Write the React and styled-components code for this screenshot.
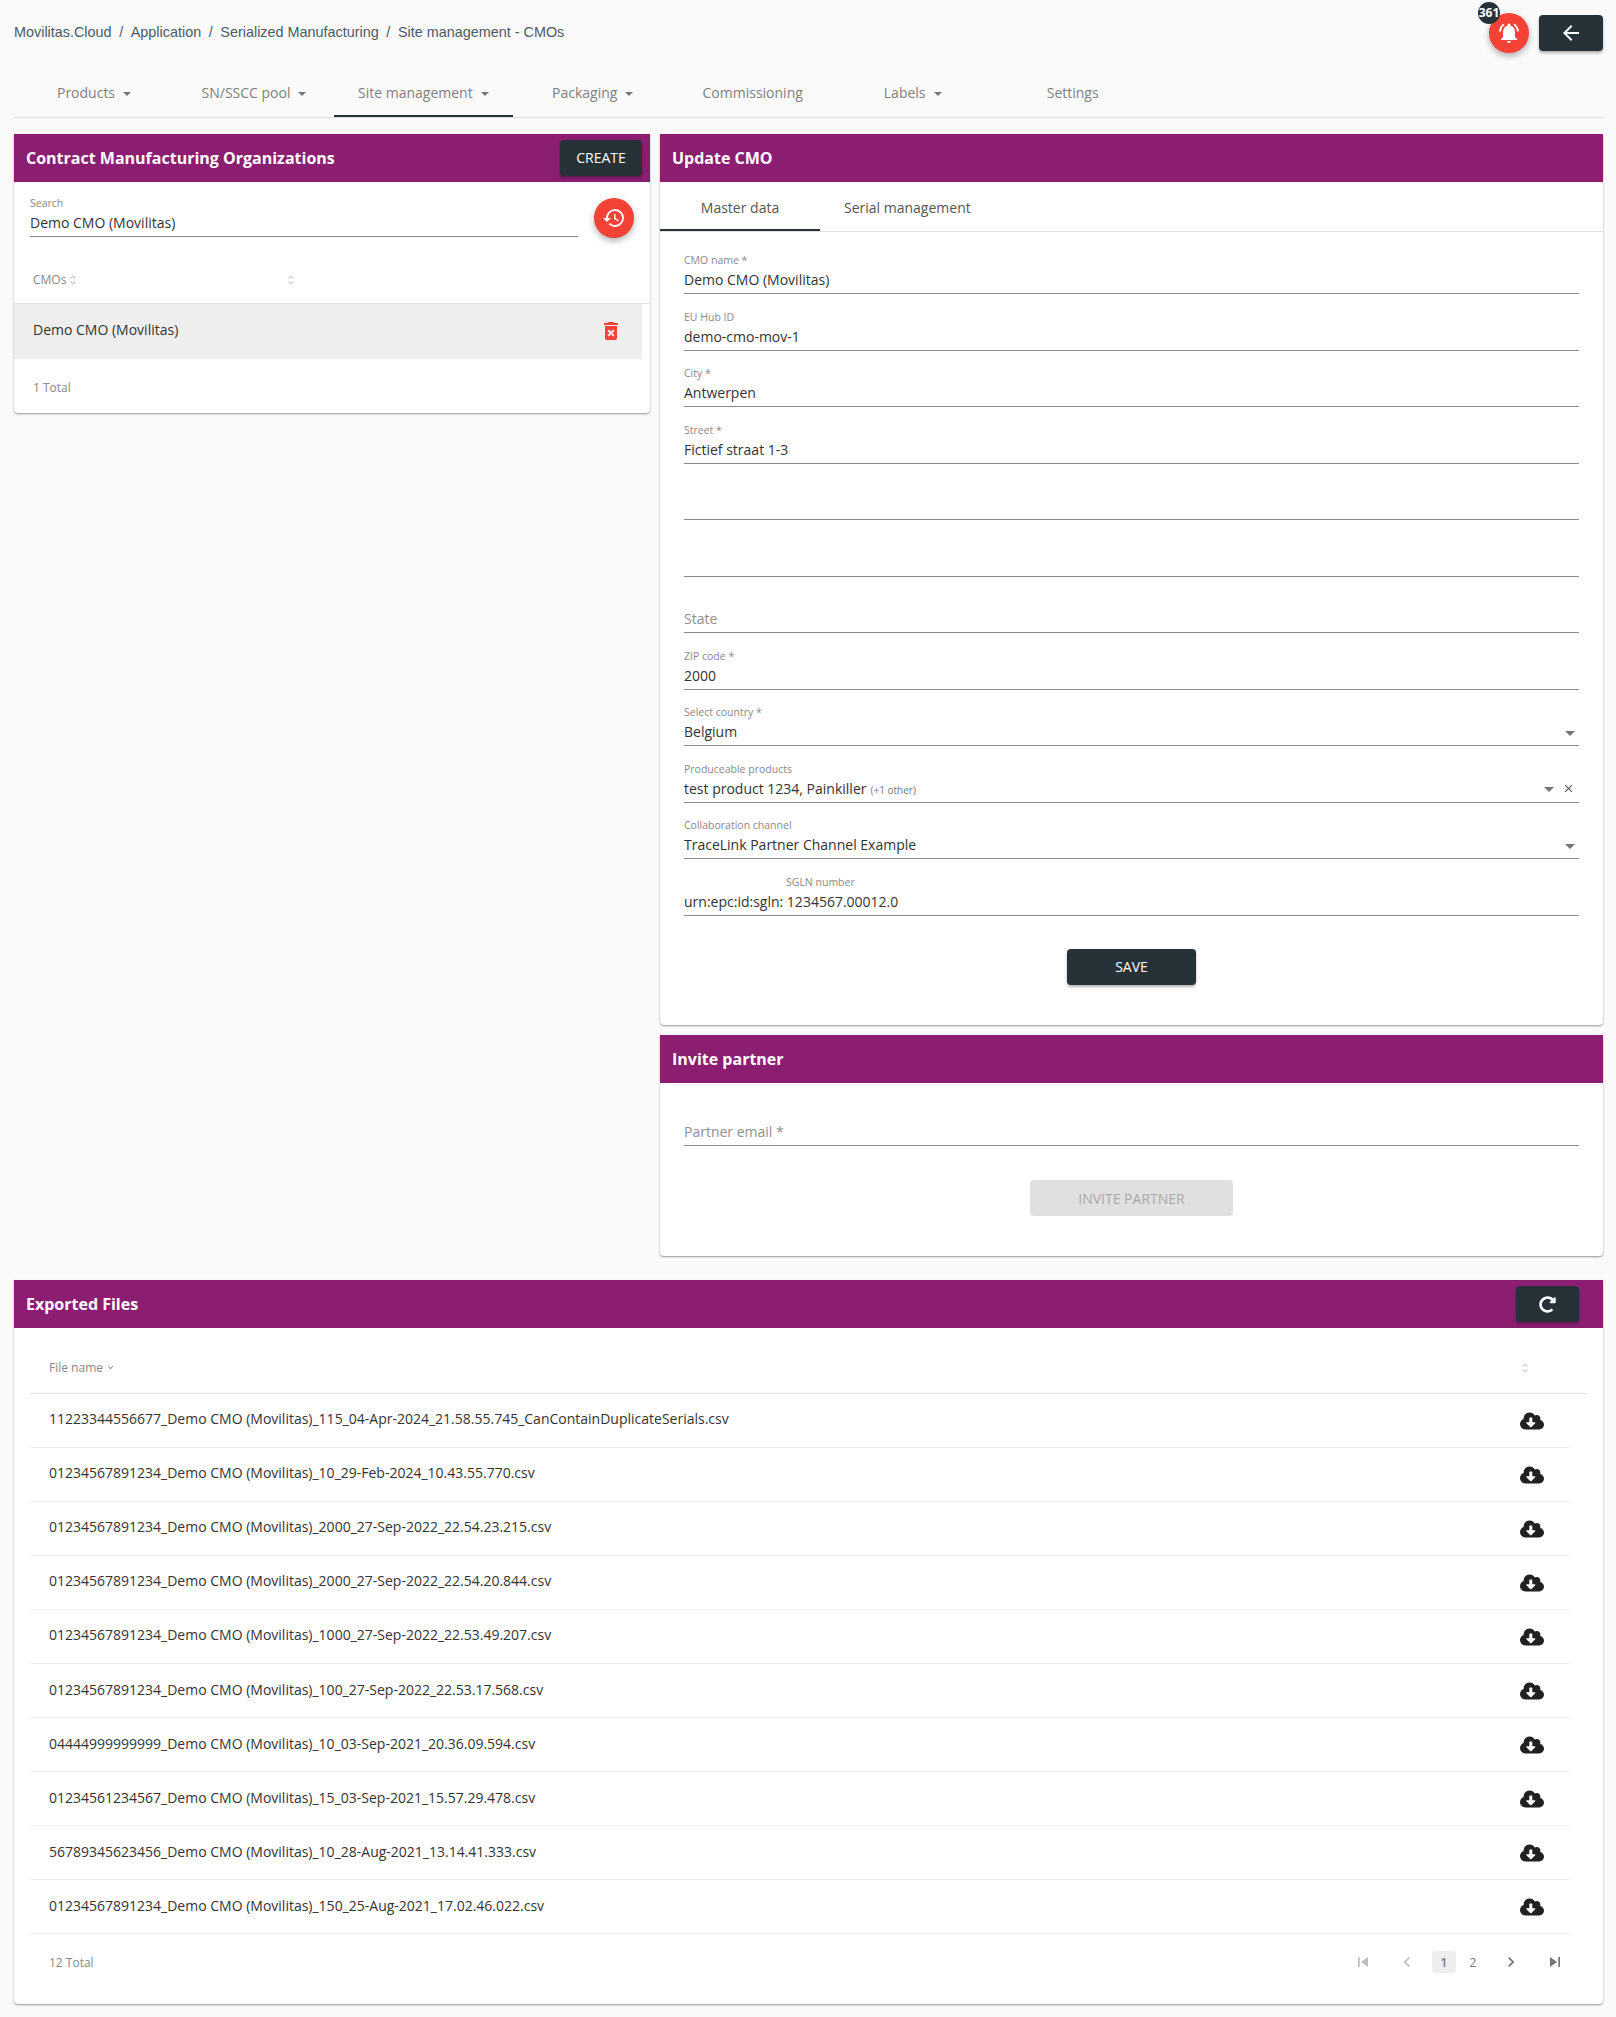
import React from 'react';
import styled, { createGlobalStyle } from 'styled-components';
import { MdArrowBack, MdNotificationsActive, MdRestore, MdDeleteForever, MdSkipPrevious, MdSkipNext, MdChevronLeft, MdChevronRight, MdClose, MdExpandMore } from 'react-icons/md';
import { FaCloudDownloadAlt, FaRedoAlt } from 'react-icons/fa';

const Global = createGlobalStyle`
  html, body { margin: 0; background: #fafafa; }
  body { font-family: "Open Sans", "Noto Sans", sans-serif; font-size: 14px; color: #333; }
  * { box-sizing: border-box; }
`;
const Page = styled.div`width: 1616px; height: 2017px; padding: 0 13px 0 14px; display: flex; flex-direction: column;`;
const Top = styled.div`height: 61px; display: flex; align-items: flex-start; justify-content: space-between; padding-top: 24px;`;
const Crumbs = styled.div`font: 14.4px/17px "Liberation Sans", Arial, sans-serif; color: #4a5a68; display: flex; gap: 7.6px;`;
const TopRight = styled.div`display: flex; gap: 10px; margin-top: -9px;`;
const Fab = styled.button`
  position: relative; width: 40px; height: 40px; border: 0; border-radius: 50%; background: #f44336; color: #fff; padding: 0;
  display: flex; align-items: center; justify-content: center; box-shadow: 0 3px 6px rgba(0,0,0,.3); font-size: 24px;
`;
const BellFab = styled(Fab)`margin-top: -2px;`;
const Badge = styled.span`
  position: absolute; left: -11px; top: -11px; width: 22px; height: 22px; border-radius: 50%; background: #263238; color: #fff;
  font: 700 12px/22px "Open Sans", sans-serif; text-align: center;
`;
const DarkButton = styled.button`
  width: ${p => p.$w || 64}px; height: 36px; border: 0; border-radius: 4px; background: #263238; color: #fff; padding: 0;
  font: 400 14px/36px "Open Sans", sans-serif; display: flex; align-items: center; justify-content: center;
  box-shadow: 0 2px 3px rgba(0,0,0,.3); flex: none;
`;
const Nav = styled.nav`display: flex; height: 57px; border-bottom: 1px solid #ddd;`;
const NavTab = styled.div`
  min-width: 160px; padding: 9px 24px 0; height: 56px; display: flex; align-items: center; justify-content: center; gap: 8px; color: #808080;
  border-bottom: 2px solid ${p => p.$on ? '#263238' : 'transparent'};
`;
const Caret = styled.span`width: 0; height: 0; border-left: ${p => p.$s || 4}px solid transparent; border-right: ${p => p.$s || 4}px solid transparent; border-top: ${p => p.$s || 4}px solid #757575; flex: none; margin-top: 2px;`;
const Columns = styled.div`display: grid; grid-template-columns: 636px 943px; gap: 10px; margin-top: 16px; align-items: start;`;
const Stack = styled.div`display: flex; flex-direction: column; gap: 10px;`;
const Card = styled.section`background: #fff; border-radius: 0 0 4px 4px; box-shadow: 0 1px 2px rgba(0,0,0,.4); height: ${p => p.$h}px; display: flex; flex-direction: column;`;
const Header = styled.header`
  height: 48px; flex: none; background: #8b1e71; color: #fff; display: flex; align-items: center; justify-content: space-between;
  padding: 0 ${p => p.$pr || 8}px 0 12px; font: 700 16px/20px "Open Sans", sans-serif;
`;
const SearchRow = styled.div`display: flex; height: 56px; padding: 16px 16px 0 16px; gap: 16px; align-items: flex-start;`;
const Search = styled.div`flex: 1; height: 39px; border-bottom: 1px solid #8a8a8a; display: flex; flex-direction: column;`;
const ListHead = styled.div`height: 66px; border-bottom: 1px solid #e0e0e0; display: flex; align-items: center; padding: 18px 0 0 19px; font-size: 12px; color: #888;`;
const SortCell = styled.span`width: 254px; display: flex; align-items: center; gap: 3px;`;
const CmoRow = styled.div`width: 628px; height: 55px; background: #eee; display: flex; align-items: center; justify-content: space-between; padding: 0 19px 5px 19px;`;
const Trash = styled.span`color: #f44336; font-size: 24px; display: flex; margin-top: 4px;`;
const Total = styled.div`font-size: 12px; color: #888; padding-left: 19px; margin-top: 20px;`;
const TabBar = styled.div`height: 50px; flex: none; border-bottom: 1px solid #e0e0e0; display: flex;`;
const InnerTab = styled.div`
  min-width: 160px; padding: ${p => p.$on ? 4 : 2}px 24px 0; height: 49px; display: flex; align-items: center; justify-content: center; color: #555; 
  border-bottom: ${p => p.$on ? '2px solid #263238' : '0'}; margin-bottom: -1px;
`;
const Form = styled.div`padding: ${p => p.$pt}px 24px 0 24px; display: flex; flex-direction: column;`;
const Field = styled.div`height: 56.5px; flex: none; border-bottom: 1px solid #8a8a8a; display: flex; flex-direction: column; justify-content: flex-end; padding-bottom: 3px; position: relative;`;
const Label = styled.label`font-size: 10.5px; line-height: 14px; color: #8a8a8a; margin-left: ${p => p.$ml || 0}px; margin-bottom: 3px;`;
const SearchLabel = styled(Label)`margin: -2px 0 3px 0;`;
const Value = styled.div`font-size: 14px; line-height: 20px; height: 20px; color: ${p => p.$muted ? '#909090' : '#333'}; display: flex; align-items: center;`;
const Other = styled.small`font-size: 10px; color: #777; margin-left: 4px; margin-top: 2px;`;
const Tools = styled.span`margin-left: auto; display: flex; align-items: center; gap: 8px; padding-right: 4px; color: #555;`;
const Actions = styled.div`display: flex; justify-content: center; margin-top: ${p => p.$mt}px;`;
const Disabled = styled.button`width: 203px; height: 36px; border: 0; border-radius: 4px; background: #e0e0e0; color: #a8a8a8; font: 14px "Open Sans", sans-serif;`;
const Table = styled.div`padding: 0 16px; display: flex; flex-direction: column;`;
const FileHead = styled.div`height: 66px; flex: none; border-bottom: 1px solid #e0e0e0; display: flex; align-items: center; justify-content: space-between; padding: 14px 0 0 19px; font-size: 12px; color: #888;`;
const HeadName = styled.span`display: flex; align-items: center; gap: 2px;`;
const SortEnd = styled.span`display: flex; margin-right: 58px;`;
const FileRow = styled.div`width: 1540px; height: 54.04px; flex: none; border-bottom: 1px solid #eee; display: flex; align-items: center; justify-content: space-between; padding: 0 26px 3.32px 19px; margin-right: 17px;`;
const Cloud = styled.span`display: flex; font-size: 24px; color: #212121; margin-top: 4.4px;`;
const ExportWrap = styled(Stack)`margin-top: 24px;`;
const Footer = styled.div`display: flex; align-items: center; justify-content: space-between; height: 56px; padding: 0 20px 0 19px; font-size: 12px; color: #888;`;
const Pager = styled.div`display: flex; align-items: center; margin-right: -6px; color: #777; font-size: 12px; height: 22px;`;
const PageIcon = styled.span`width: ${p => p.$w}px; margin-right: ${p => p.$mr || 0}px; display: flex; justify-content: center; font-size: 20px; color: ${p => p.$off ? '#bdbdbd' : '#757575'};`;
const PageNum = styled.span`width: 24px; height: 22px; border-radius: 3px; display: flex; align-items: center; justify-content: center; margin-right: ${p => p.$mr || 0}px; background: ${p => p.$on ? '#eee' : 'transparent'}; font-weight: ${p => p.$on ? 600 : 400};`;

const Sort = () => (
  <svg width="8" height="12" viewBox="0 0 8 12" fill="none" stroke="#bbb" strokeWidth="1"><path d="M1.5 4.5 4 2l2.5 2.5M1.5 7.5 4 10l2.5-2.5" /></svg>
);

const F = ({ label, value, ml, muted, select, multi, other }) => (
  <Field>
    {label && <Label $ml={ml}>{label}</Label>}
    <Value $muted={muted}>
      {value}{other && <Other>{other}</Other>}
      {select && <Tools><Caret $s={5} />{multi && <MdClose size={13} />}</Tools>}
    </Value>
  </Field>
);

const files = [
  '11223344556677_Demo CMO (Movilitas)_115_04-Apr-2024_21.58.55.745_CanContainDuplicateSerials.csv',
  '01234567891234_Demo CMO (Movilitas)_10_29-Feb-2024_10.43.55.770.csv',
  '01234567891234_Demo CMO (Movilitas)_2000_27-Sep-2022_22.54.23.215.csv',
  '01234567891234_Demo CMO (Movilitas)_2000_27-Sep-2022_22.54.20.844.csv',
  '01234567891234_Demo CMO (Movilitas)_1000_27-Sep-2022_22.53.49.207.csv',
  '01234567891234_Demo CMO (Movilitas)_100_27-Sep-2022_22.53.17.568.csv',
  '04444999999999_Demo CMO (Movilitas)_10_03-Sep-2021_20.36.09.594.csv',
  '01234561234567_Demo CMO (Movilitas)_15_03-Sep-2021_15.57.29.478.csv',
  '56789345623456_Demo CMO (Movilitas)_10_28-Aug-2021_13.14.41.333.csv',
  '01234567891234_Demo CMO (Movilitas)_150_25-Aug-2021_17.02.46.022.csv',
];

const tabs = [['Products', 1], ['SN/SSCC pool', 1], ['Site management', 1, 1], ['Packaging', 1], ['Commissioning'], ['Labels', 1], ['Settings']];

export default function App() {
  return (
    <Page>
      <Global />
      <Top>
        <Crumbs>
          <span>Movilitas.Cloud</span><span>/</span><span>Application</span><span>/</span><span>Serialized Manufacturing</span><span>/</span><span>Site management - CMOs</span>
        </Crumbs>
        <TopRight>
          <BellFab><Badge>361</Badge><MdNotificationsActive /></BellFab>
          <DarkButton><MdArrowBack size={24} /></DarkButton>
        </TopRight>
      </Top>
      <Nav>
        {tabs.map(([t, c, on]) => <NavTab key={t} $on={on}>{t}{c && <Caret />}</NavTab>)}
      </Nav>
      <Columns>
        <Card $h={279}>
          <Header>Contract Manufacturing Organizations<DarkButton $w={82}>CREATE</DarkButton></Header>
          <SearchRow>
            <Search>
              <SearchLabel>Search</SearchLabel>
              <Value>Demo CMO (Movilitas)</Value>
            </Search>
            <Fab><MdRestore /></Fab>
          </SearchRow>
          <ListHead><SortCell>CMOs <Sort /></SortCell><Sort /></ListHead>
          <CmoRow>Demo CMO (Movilitas)<Trash><MdDeleteForever /></Trash></CmoRow>
          <Total>1 Total</Total>
        </Card>
        <Stack>
          <Card $h={891}>
            <Header>Update CMO</Header>
            <TabBar><InnerTab $on>Master data</InnerTab><InnerTab>Serial management</InnerTab></TabBar>
            <Form $pt={5.9}>
              <F label="CMO name *" value="Demo CMO (Movilitas)" />
              <F label="EU Hub ID" value="demo-cmo-mov-1" />
              <F label="City *" value="Antwerpen" />
              <F label="Street *" value="Fictief straat 1-3" />
              <F />
              <F />
              <F value="State" muted />
              <F label="ZIP code *" value="2000" />
              <F label="Select country *" value="Belgium" select />
              <F label="Produceable products" value="test product 1234, Painkiller" other="(+1 other)" select multi />
              <F label="Collaboration channel" value="TraceLink Partner Channel Example" select />
              <F label="SGLN number" ml={102} value="urn:epc:id:sgln: 1234567.00012.0" />
              <Actions $mt={33}><DarkButton $w={129}>SAVE</DarkButton></Actions>
            </Form>
          </Card>
          <Card $h={221}>
            <Header>Invite partner</Header>
            <Form $pt={6.5}>
              <F value="Partner email *" muted />
              <Actions $mt={34}><Disabled>INVITE PARTNER</Disabled></Actions>
            </Form>
          </Card>
        </Stack>
      </Columns>
      <ExportWrap>
        <Card $h={724}>
          <Header $pr={24}>Exported Files<DarkButton $w={63}><FaRedoAlt size={17} /></DarkButton></Header>
          <Table>
            <FileHead><HeadName>File name <MdExpandMore size={11} /></HeadName><SortEnd><Sort /></SortEnd></FileHead>
            {files.map(f => <FileRow key={f}>{f}<Cloud><FaCloudDownloadAlt /></Cloud></FileRow>)}
            <Footer>
              <span>12 Total</span>
              <Pager>
                <PageIcon $w={60} $off><MdSkipPrevious /></PageIcon>
                <PageIcon $w={28} $mr={11} $off><MdChevronLeft /></PageIcon>
                <PageNum $on $mr={5}>1</PageNum>
                <PageNum>2</PageNum>
                <PageIcon $w={52}><MdChevronRight /></PageIcon>
                <PageIcon $w={36}><MdSkipNext /></PageIcon>
              </Pager>
            </Footer>
          </Table>
        </Card>
      </ExportWrap>
    </Page>
  );
}
